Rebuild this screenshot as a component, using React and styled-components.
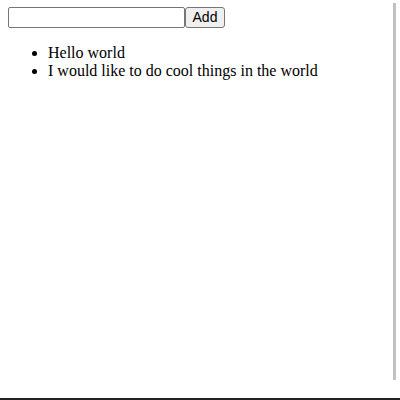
import React, { useState } from "react";
import styled, { createGlobalStyle } from "styled-components";

const GlobalStyle = createGlobalStyle`
  html, body {
    margin: 0;
    padding: 0;
    background: #ffffff;
  }
  body {
    font-family: "Liberation Serif", "Times New Roman", serif;
    font-size: 16px;
    color: #000000;
  }
`;

const Frame = styled.div`
  display: flex;
  height: 398px;
  border-bottom: 2px solid #222222;
`;

const Content = styled.div`
  flex: 1;
  padding: 7px 8px 8px;
`;

const Rail = styled.div`
  width: 3px;
  margin: 3px 4px 18px 0;
  background: #c1c1c1;
`;

const Form = styled.form`
  display: flex;
  align-items: stretch;
  height: 21px;
`;

const TextInput = styled.input`
  box-sizing: border-box;
  width: 177px;
  height: 21px;
  margin: 0;
  padding: 1px 2px;
  border: 1px solid #767676;
  border-radius: 2px;
  font-family: "Liberation Sans", Arial, sans-serif;
  font-size: 13.33px;
  background: #ffffff;
`;

const AddButton = styled.button`
  box-sizing: border-box;
  width: 40px;
  height: 21px;
  margin: 0;
  padding: 0 5px;
  border: 1px solid #767676;
  border-radius: 3px;
  background: #efefef;
  font-family: "Liberation Sans", Arial, sans-serif;
  font-size: 14px;
  line-height: 19px;
  color: #000000;
`;

const TodoList = styled.ul`
  margin: 16px 0;
  padding-left: 40px;
  line-height: 18px;
`;

const TodoItem = styled.li`
  list-style: disc;
`;

export default function App() {
  const [text, setText] = useState("");
  const [items, setItems] = useState([
    "Hello world",
    "I would like to do cool things in the world",
  ]);

  const addHandler = (e) => {
    e.preventDefault();
    if (!text.trim()) return;
    setItems([...items, text]);
    setText("");
  };

  return (
    <Frame>
      <GlobalStyle />
      <Content>
        <Form onSubmit={addHandler}>
          <TextInput value={text} onChange={(e) => setText(e.target.value)} />
          <AddButton type="submit">Add</AddButton>
        </Form>
        <TodoList>
          {items.map((item, i) => (
            <TodoItem key={i}>{item}</TodoItem>
          ))}
        </TodoList>
      </Content>
      <Rail />
    </Frame>
  );
}
